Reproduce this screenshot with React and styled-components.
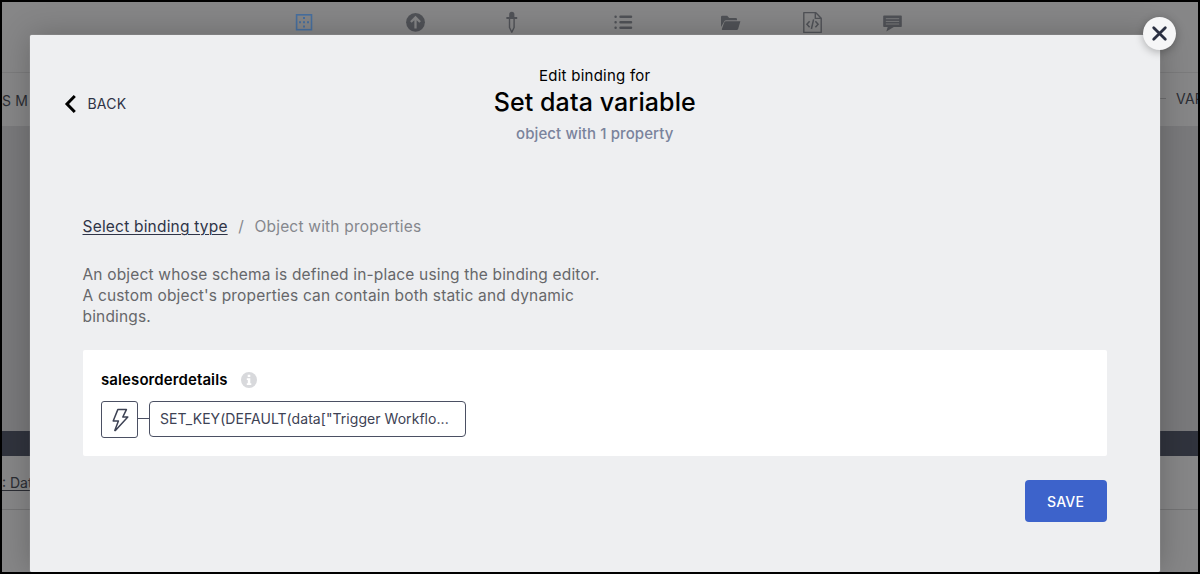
import React from "react";
import styled, { createGlobalStyle } from "styled-components";

const GlobalStyle = createGlobalStyle`
  *, *::before, *::after { box-sizing: border-box; }
  body { margin: 0; background: #000; font-family: Inter, "Liberation Sans", sans-serif; }
`;

const Screen = styled.div`
  position: relative;
  width: 1200px;
  height: 574px;
  border: 2px solid #000;
  overflow: hidden;
  background: #868687;
`;

const Page = styled.div`
  display: flex;
  flex-direction: column;
  height: 100%;
  color: #2b2d33;
`;

const Toolbar = styled.nav`
  display: flex;
  align-items: flex-start;
  height: 71px;
  padding: 8px 0 0 291px;
  border-bottom: 1px solid #7b7b7c;
`;

const ToolIcon = styled.svg`
  flex: none;
  width: 24px;
  height: 24px;
  margin-right: ${(p) => p.$gap || 0}px;
  color: ${(p) => (p.$active ? "#476f9f" : "#505257")};
`;

const TabStrip = styled.div`
  display: flex;
  justify-content: space-between;
  align-items: center;
  height: 53px;
  font-size: 14px;
  letter-spacing: 0.2px;
  white-space: nowrap;
`;

const TabLabel = styled.span`
  display: flex;
  align-items: center;
  gap: 10px;
  margin-right: ${(p) => (p.$end ? "-6px" : 0)};
  margin-top: ${(p) => (p.$end ? "-3px" : "2px")};
`;

const Dash = styled.span`
  width: 8px;
  height: 1px;
  background: #6c6c6e;
`;

const Canvas = styled.div`
  height: 305px;
  background: #79797b;
`;

const DarkBar = styled.div`
  height: 25px;
  background: #30333d;
`;

const Footer = styled.div`
  height: 54px;
  padding-top: 19px;
  border-bottom: 1px solid #737374;
  font-size: 14px;
  line-height: 15px;
`;

const FooterLink = styled.span`
  display: inline-block;
  border-bottom: 1px solid #2b2d33;
`;

const Dialog = styled.section`
  position: absolute;
  top: 33px;
  left: 28px;
  display: flex;
  flex-direction: column;
  width: 1130px;
  height: 537px;
  padding: 0 53px 0 52.5px;
  border-radius: 2px;
  background: #eeeff1;
  box-shadow: 0 0 32px rgba(0, 0, 0, 0.24), 0 0 1px #fff;
`;

const Header = styled.header`
  display: grid;
  grid-template-columns: 1fr auto 1fr;
  height: 182px;
  padding-top: 30px;
`;

const BackButton = styled.button`
  display: flex;
  align-items: center;
  gap: 11px;
  height: 20px;
  margin: 29px 0 0 -19px;
  padding: 0;
  border: 0;
  background: none;
  color: #2f3447;
  font: 400 14px/20px Inter, sans-serif;
  letter-spacing: 0.2px;
`;

const Heading = styled.div`
  display: flex;
  flex-direction: column;
  align-items: center;
  color: #000;
`;

const Overline = styled.span`
  font-size: 15px;
  font-weight: 400;
  line-height: 21px;
  letter-spacing: 0.25px;
`;

const Title = styled.h1`
  margin: 0;
  font-size: 25px;
  font-weight: 500;
  line-height: 33px;
  letter-spacing: 0.1px;
`;

const Subtitle = styled.span`
  margin-top: 5px;
  color: #7a839c;
  font-size: 15px;
  font-weight: 450;
  line-height: 20px;
  letter-spacing: 0.1px;
`;

const Breadcrumb = styled.nav`
  display: flex;
  gap: 10.5px;
  color: #85878d;
  font-size: 15.5px;
  line-height: 20px;
  letter-spacing: 0.2px;
`;

const CrumbLink = styled.a`
  color: #2f3447;
  text-decoration: underline;
  text-decoration-thickness: 1px;
  text-underline-offset: 2px;
`;

const Description = styled.p`
  width: 525px;
  margin: 27px 0 23px;
  color: #66676a;
  font-size: 15.5px;
  line-height: 21.1px;
  letter-spacing: 0.17px;
`;

const Card = styled.div`
  height: 106px;
  padding: 20px 18.5px;
  border-radius: 2px;
  background: #fff;
`;

const FieldLabel = styled.div`
  display: flex;
  align-items: center;
  gap: 13px;
  color: #000;
  font-size: 15px;
  font-weight: 600;
  line-height: 20px;
  letter-spacing: 0.1px;
`;

const BindingRow = styled.div`
  display: flex;
  margin-top: 11px;
`;

const TypeButton = styled.button`
  display: grid;
  place-items: center;
  width: 37px;
  height: 37px;
  padding: 0;
  border: 1.5px solid #4b5063;
  border-radius: 3px;
  background: #fff;
`;

const Connector = styled.span`
  width: 10.5px;
  height: 1px;
  margin-top: 17px;
  background: #4b5063;
`;

const Formula = styled.div`
  width: 317.5px;
  height: 36px;
  padding: 0 10.5px;
  border: 1.5px solid #4b5063;
  border-radius: 4px;
  color: #3d4254;
  font-size: 14px;
  line-height: 34px;
  letter-spacing: 0.05px;
  white-space: nowrap;
`;

const SaveButton = styled.button`
  align-self: flex-end;
  width: 82px;
  height: 42px;
  margin-top: 24px;
  padding: 0 1px 0 0;
  border: 0;
  border-radius: 4px;
  background: #3d63cb;
  color: #fff;
  font: 500 14px Inter, sans-serif;
  letter-spacing: 0.2px;
`;

const CloseButton = styled.button`
  position: absolute;
  top: 15px;
  left: 1141px;
  display: grid;
  place-items: center;
  width: 33px;
  height: 33px;
  padding: 0;
  border: 0;
  border-radius: 50%;
  background: #f6f6f7;
  box-shadow: 0 2px 8px rgba(0, 0, 0, 0.28);
`;

const tools = [
  {
    id: "layout",
    active: true,
    gap: 87,
    art: (
      <>
        <rect x="3.6" y="4.8" width="14.9" height="14.9" fill="none" stroke="currentColor" strokeWidth="1.6" />
        <path d="M10 7h2v2h-2zM10 11.200h2v2h-2zM10 15.400h2v2h-2zM6 11.200h2v2H6zM14 11.200h2v2h-2z" fill="currentColor" />
      </>
    ),
  },
  {
    id: "publish",
    gap: 72,
    art: (
      <>
        <circle cx="11.500" cy="12.300" r="9.400" fill="currentColor" />
        <path d="M11.500 18.400V7.600M6.900 12l4.600-4.600 4.600 4.600" fill="none" stroke="#858586" strokeWidth="2.300" />
      </>
    ),
  },
  {
    id: "theme",
    gap: 88,
    art: (
      <>
        <path d="M9.200 7V4.400a2.600 2.600 0 0 1 5.200 0V7h2.800v2H6.400V7z" fill="currentColor" />
        <path d="M9.500 9v8.500l2.300 4.800 2.300-4.800V9" fill="none" stroke="currentColor" strokeWidth="1.400" strokeLinejoin="round" />
      </>
    ),
  },
  {
    id: "data",
    gap: 83,
    art: (
      <path
        d="M3.600 6.800h.01M8.500 6.800h10.500M3.600 12.300h.01M8.500 12.300h10.500M3.600 17.800h.01M8.500 17.800h10.500"
        fill="none" stroke="currentColor" strokeWidth="2.500" strokeLinecap="round"
      />
    ),
  },
  {
    id: "files",
    gap: 58,
    art: (
      <>
        <path d="M2 17V7q0-1.200 1.200-1.200h5L10.200 8h6.600q1.200 0 1.200 1v1.200H7.200q-1.500 0-2 1.200z" fill="currentColor" />
        <path d="M7 11.200h14.400l-2.200 7.600q-.4 1.200-1.600 1.200H3.400q-.8 0-.5-1l2.300-6.600q.4-1.200 1.800-1.200z" fill="currentColor" />
      </>
    ),
  },
  {
    id: "code",
    gap: 56,
    art: (
      <>
        <path d="M2.800 2.600h11.800l5.600 5.600v14.200H2.800zM14.300 2.800v5.600h5.800" fill="none" stroke="currentColor" strokeWidth="1.400" strokeLinejoin="round" />
        <path d="M8.600 11.200 5.900 14.200l2.700 3M14.400 11.200l2.700 3-2.700 3M12.600 9.400l-2.200 9.600" fill="none" stroke="currentColor" strokeWidth="1.500" />
      </>
    ),
  },
  {
    id: "comments",
    art: (
      <>
        <path d="M3 5.500h17q.8 0 .8.8v10q0 .8-.8.8h-7.200l-7.500 4.500 1.400-4.500H3q-.8 0-.8-.8v-10q0-.8.8-.8z" fill="currentColor" />
        <path d="M4.800 8.700h13.400M4.800 11.400h13.400M4.800 14h13.400" stroke="#858586" strokeWidth="0.800" />
      </>
    ),
  },
];

const BackArrow = () => (
  <svg width="13" height="20" viewBox="0 0 13 20">
    <path d="M10.800 2 3 10l7.800 8" fill="none" stroke="#000" strokeWidth="3" />
  </svg>
);

const InfoIcon = () => (
  <svg width="16" height="16" viewBox="0 0 16 16">
    <circle cx="8" cy="8" r="8" fill="#d8d9dc" />
    <path d="M6.700 2.800h2.600v2.200H6.700zM5.800 6.300h3.500v5h1V13H5.800v-1.700h1V8h-1z" fill="#fff" />
  </svg>
);

const BoltIcon = () => (
  <svg width="20" height="24" viewBox="0 0 20 24">
    <path d="M7.800 1.600h8.600L12.800 9h5L5.400 22.400H4.800L8.400 13H3.200z" fill="none" stroke="#3d4254" strokeWidth="1.500" strokeLinejoin="round" />
  </svg>
);

const CloseIcon = () => (
  <svg width="17" height="17" viewBox="0 0 17 17">
    <path d="M2.700 2.700l11.600 11.600M14.300 2.700 2.700 14.300" stroke="#2b3042" strokeWidth="2.800" strokeLinecap="round" />
  </svg>
);

export default function App() {
  return (
    <>
      <GlobalStyle />
      <Screen>
        <Page>
          <Toolbar>
            {tools.map((t) => (
              <ToolIcon key={t.id} viewBox="0 0 24 24" $gap={t.gap} $active={t.active}>
                {t.art}
              </ToolIcon>
            ))}
          </Toolbar>
          <TabStrip>
            <TabLabel>S M</TabLabel>
            <TabLabel $end>
              <Dash />
              VAR
            </TabLabel>
          </TabStrip>
          <Canvas />
          <DarkBar />
          <Footer>
            <FooterLink>: Data</FooterLink>
          </Footer>
        </Page>

        <Dialog>
          <Header>
            <BackButton>
              <BackArrow />
              BACK
            </BackButton>
            <Heading>
              <Overline>Edit binding for</Overline>
              <Title>Set data variable</Title>
              <Subtitle>object with 1 property</Subtitle>
            </Heading>
          </Header>
          <Breadcrumb>
            <CrumbLink>Select binding type</CrumbLink>
            <span>/</span>
            <span>Object with properties</span>
          </Breadcrumb>
          <Description>
            An object whose schema is defined in-place using the binding editor. A custom object's
            properties can contain both static and dynamic bindings.
          </Description>
          <Card>
            <FieldLabel>
              salesorderdetails
              <InfoIcon />
            </FieldLabel>
            <BindingRow>
              <TypeButton>
                <BoltIcon />
              </TypeButton>
              <Connector />
              <Formula>SET_KEY(DEFAULT(data["Trigger Workflo...</Formula>
            </BindingRow>
          </Card>
          <SaveButton>SAVE</SaveButton>
        </Dialog>

        <CloseButton>
          <CloseIcon />
        </CloseButton>
      </Screen>
    </>
  );
}
